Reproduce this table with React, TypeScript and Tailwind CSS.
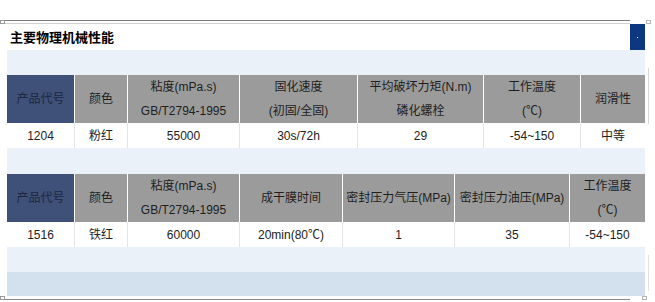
import React from 'react';

type Cell = { lines: string[] };

const font = { fontFamily: '"Liberation Sans", "Noto Sans CJK SC", sans-serif' };

const tableOne = {
  cols: 'grid-cols-[68px_53px_112px_118px_126px_97px_64px]',
  head: [['产品代号'], ['颜色'], ['粘度(mPa.s)', 'GB/T2794-1995'], ['固化速度', '(初固/全固)'], ['平均破坏力矩(N.m)', '磷化螺栓'], ['工作温度', '(℃)'], ['润滑性']],
  row: ['1204', '粉红', '55000', '30s/72h', '29', '-54~150', '中等'],
};

const tableTwo = {
  cols: 'grid-cols-[68px_53px_112px_103px_112px_115px_75px]',
  head: [['产品代号'], ['颜色'], ['粘度(mPa.s)', 'GB/T2794-1995'], ['成干膜时间'], ['密封压力气压(MPa)'], ['密封压力油压(MPa)'], ['工作温度', '(℃)']],
  row: ['1516', '铁红', '60000', '20min(80℃)', '1', '35', '-54~150'],
};

const SpecTable = ({ cols, head, row }: { cols: string; head: string[][]; row: string[] }) => (
  <div className="w-[638px]">
    <div className={`grid ${cols} h-[48px]`}>
      {head.map((lines, i) => (
        <div
          key={i}
          className={`flex flex-col items-center justify-center text-[12px] leading-[24px] whitespace-nowrap ${
            i === 0 ? 'bg-[#3f5079] text-[#1c2840]' : 'bg-[#9b9b9b] text-[#1e1e1e]'
          } ${i < head.length - 1 ? 'border-r border-white' : ''}`}
        >
          {lines.map((l) => (
            <span key={l}>{l}</span>
          ))}
        </div>
      ))}
    </div>
    <div className={`grid ${cols} h-[25px] bg-white`}>
      {row.map((v, i) => (
        <div
          key={i}
          className={`flex items-center justify-center text-[12px] text-[#222] whitespace-nowrap ${
            i < row.length - 1 ? 'border-r border-[#e4e4e4]' : ''
          }`}
        >
          {v}
        </div>
      ))}
    </div>
  </div>
);

export default function App() {
  return (
    <div className="w-[655px] h-[302px] bg-white relative overflow-hidden" style={font}>
      <div className="h-[20px]" />
      {/* top rule */}
      <div className="flex items-start">
        <div className="w-[5px] h-[4px] border border-[#9a9a9a] bg-white" />
        <div className="w-[625px]">
          <div className="h-px bg-[#7d7d7d]" />
          <div className="h-[2px]" />
          <div className="h-px bg-[#cfcfcf]" />
        </div>
        <div className="ml-[16px] w-[5px] h-[4px] border border-[#b5b5b5] bg-white" />
      </div>

      {/* title */}
      <div className="flex h-[26px] pl-[10px]">
        <div className="flex-1 flex items-center text-[13px] font-bold text-black" style={{ fontFamily: '"Noto Sans CJK SC", sans-serif' }}>
          主要物理机械性能
        </div>
        <div className="w-[15px] mr-[10px] bg-[#0d3781] flex items-center justify-center">
          <div className="w-px h-px bg-white" />
        </div>
      </div>

      <div className="pl-[7px]">
        <div className="w-[638px] h-[25px] bg-[#ebf1f8]" />
        <SpecTable {...tableOne} />
        <div className="w-[638px] h-[26px] bg-[#ebf1f8]" />
        <SpecTable {...tableTwo} />
        <div className="w-[638px] h-[25px] bg-[#ebf1f8]" />
        <div className="w-[638px] h-[24px] bg-[#d3e1ef]" />
      </div>

      {/* bottom rule */}
      <div className="flex items-end">
        <div className="w-[5px] h-[4px] border border-[#9a9a9a] bg-white" />
        <div className="w-[625px] h-px bg-[#8a8a8a]" />
        <div className="ml-[12px] w-[5px] h-[4px] border border-[#b5b5b5] bg-white" />
      </div>

      {/* faint scroll track */}
      <div className="absolute left-[648px] top-[68px] w-px h-[56px] bg-[#d8d8d8]" />
      <div className="absolute left-[648px] top-[255px] w-px h-[36px] bg-[#e2e2e2]" />
    </div>
  );
}
